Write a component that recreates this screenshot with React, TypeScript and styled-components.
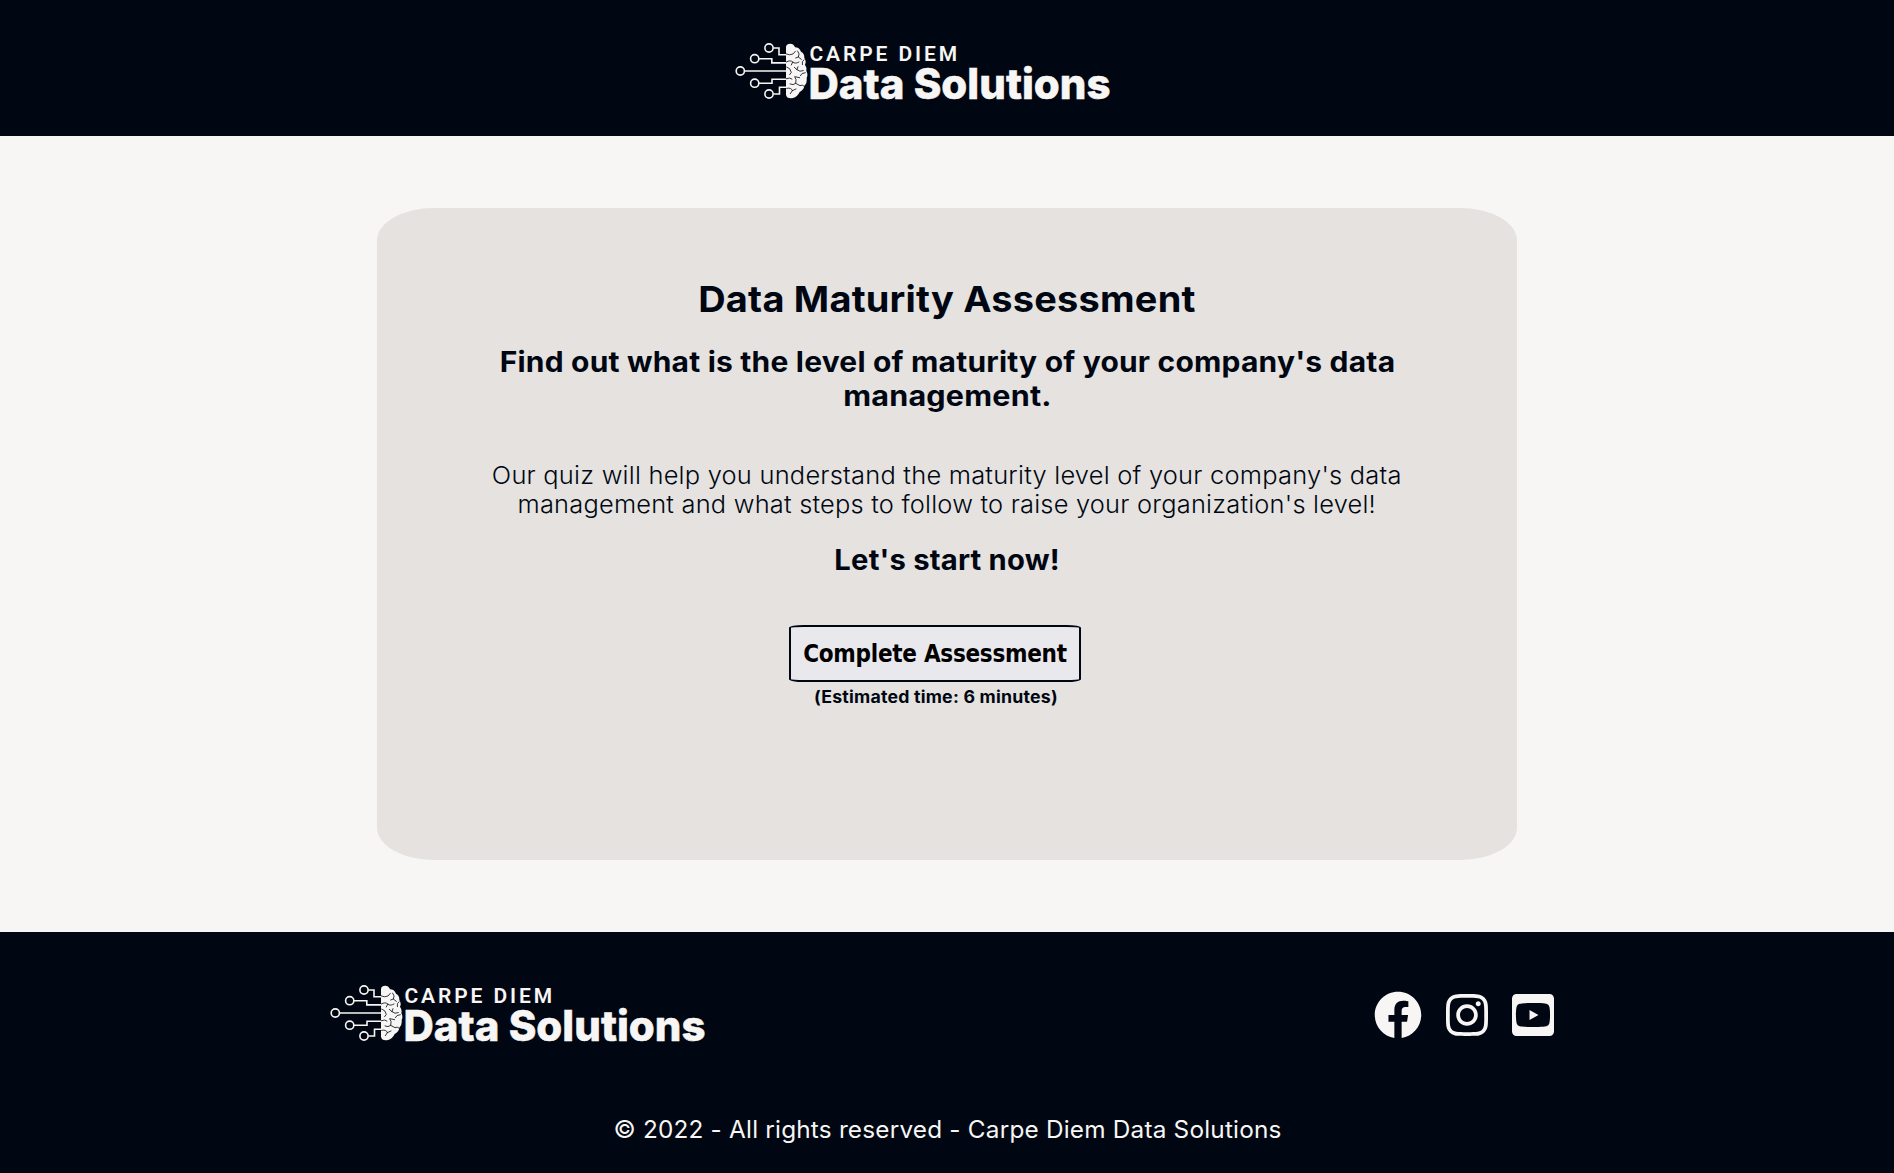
import React from "react";
import styled, { createGlobalStyle } from "styled-components";
import { FaFacebook, FaInstagram, FaYoutubeSquare } from "react-icons/fa";

const navy = "#000712";
const paper = "#f7f6f4";

const GlobalStyle = createGlobalStyle`
  *, *::before, *::after { box-sizing: border-box; }
  body {
    margin: 0;
    background: ${paper};
    color: ${navy};
    font-family: Inter, "Open Sans", sans-serif;
  }
`;

const Page = styled.div`
  display: flex;
  flex-direction: column;
  height: 1173px;
  overflow: hidden;
`;

const Header = styled.header`
  display: flex;
  justify-content: center;
  height: 136px;
  padding: 42px 48px 0 0;
  background: ${navy};
`;

const LogoSvg = styled.svg`
  display: block;
  flex: none;
  width: 376px;
  height: 60px;
  overflow: visible;
`;

const Main = styled.main`
  display: flex;
  justify-content: center;
  height: 796px;
  padding: 72px 0;
`;

const Card = styled.section`
  display: flex;
  flex-direction: column;
  align-items: center;
  width: 1140px;
  height: 652px;
  padding-top: 68px;
  border-radius: 5%;
  background: #e5e2df;
  text-align: center;
`;

const Line = styled.span<{ $stretch?: number; $spacing?: number }>`
  display: block;
  white-space: nowrap;
  letter-spacing: ${(p) => p.$spacing ?? 0.2}px;
  transform: scaleX(${(p) => p.$stretch ?? 1});
`;

const Title = styled.h1`
  margin: 0;
  font-size: 36px;
  line-height: 46px;
  font-weight: 700;
`;

const Subtitle = styled.h2<{ $top: number }>`
  margin: ${(p) => p.$top}px 0 0;
  font-size: 28px;
  line-height: 34px;
  font-weight: 700;
`;

const Intro = styled.p`
  margin: 48px 0 0;
  font-size: 24px;
  line-height: 29px;
  font-weight: 300;
`;

const Action = styled.div`
  display: flex;
  flex-direction: column;
  align-items: center;
  margin: 48px 24px 0 0;
`;

const StartButton = styled.button`
  display: flex;
  align-items: center;
  justify-content: center;
  width: 292px;
  height: 57px;
  padding: 1px 0 0;
  border: 2px solid ${navy};
  border-radius: 5%;
  background: #e9e9ed;
  color: #000;
  font: 700 24px "DejaVu Sans Condensed", "DejaVu Sans", sans-serif;
  font-stretch: condensed;
`;

const Estimate = styled.p`
  margin: 4px 0 0 2px;
  font-size: 17px;
  line-height: 22px;
  font-weight: 700;
`;

const Footer = styled.footer`
  display: flex;
  flex-direction: column;
  height: 241px;
  padding-top: 52px;
  border-bottom: 1px solid #000;
  background: ${navy};
  color: ${paper};
`;

const FooterRow = styled.div`
  display: flex;
  justify-content: space-between;
  padding: 0 340px 0 330px;
`;

const Socials = styled.nav`
  display: flex;
  align-items: center;
  gap: 24px;
  height: 62px;
`;

const SocialLink = styled.a<{ $width: number }>`
  display: flex;
  color: inherit;
  svg {
    width: ${(p) => p.$width}px;
    height: 48px;
  }
`;

const Copyright = styled.p`
  display: flex;
  justify-content: center;
  margin: 69px 0 0;
  font-size: 24px;
  line-height: 30px;
  font-weight: 400;
`;

function Logo() {
  return (
    <LogoSvg viewBox="0 0 376 60" role="img" aria-label="Carpe Diem Data Solutions">
      <g fill="none" stroke={paper} strokeWidth="1.6">
        <circle cx="34" cy="6" r="4.1" />
        <circle cx="19.7" cy="16.7" r="4.1" />
        <circle cx="5.3" cy="29" r="4.1" />
        <circle cx="19.7" cy="41.2" r="4.1" />
        <circle cx="34" cy="52" r="4.1" />
        <path d="M38.2 6H44V12.7H52M23.9 16.7H36.8V20.9H52M9.5 29H52M23.9 41.2H37V37.3H52M38.2 52H44.5V45.3H52" />
      </g>
      <g transform="translate(-5 -4) scale(.3333)">
        <path
          fill={paper}
          d="M168 28Q168 17 181 17Q192 18 195 28Q208 28 213 41Q224 46 223 60Q230 70 225 80Q232 90 229 99Q235 110 230 120Q232 136 223 143Q222 155 209 162Q202 177 189 180Q170 183 168 170Z"
        />
        <path
          fill="none"
          stroke={navy}
          strokeWidth="2.4"
          strokeLinecap="round"
          d="M169 48Q178 53 189 48L196 40M203 39Q211 48 205 57L197 60M205 57L214 64M169 72Q181 65 188 72Q195 79 207 72M188 72L184 81M222 65Q214 70 217 80M170 87Q182 90 184 103L179 110M193 88L201 95Q209 103 220 98M201 95L204 86M226 104Q214 104 211 113M169 122Q180 117 186 123M180 138Q190 143 197 136Q201 124 194 116L209 119M197 136L210 143Q217 139 222 144M170 151Q184 148 187 158L181 167M187 158L198 153"
        />
      </g>
      <text x="74.5" y="18.8" fill={paper} fontFamily="Roboto, sans-serif" fontSize="21" fontWeight="600" textLength="147.5" lengthAdjust="spacing">
        CARPE DIEM
      </text>
      <text x="73.5" y="56.8" fill={paper} stroke={paper} strokeWidth=".5" fontFamily="Inter, sans-serif" fontSize="42" fontWeight="800" textLength="302" lengthAdjust="spacingAndGlyphs">
        Data Solutions
      </text>
    </LogoSvg>
  );
}

export default function App() {
  return (
    <Page>
      <GlobalStyle />
      <Header>
        <Logo />
      </Header>
      <Main>
        <Card>
          <Title>
            <Line $stretch={1.054}>Data Maturity Assessment</Line>
          </Title>
          <Subtitle $top={23}>
            <Line $stretch={1.07}>Find out what is the level of maturity of your company's data</Line>
            <Line $stretch={1.09}>management.</Line>
          </Subtitle>
          <Intro>
            <Line $stretch={1.061}>Our quiz will help you understand the maturity level of your company's data</Line>
            <Line $stretch={1.059}>management and what steps to follow to raise your organization's level!</Line>
          </Intro>
          <Subtitle $top={24}>
            <Line $stretch={1.043}>Let's start now!</Line>
          </Subtitle>
          <Action>
            <StartButton type="button">
              <Line $spacing={-0.28}>Complete Assessment</Line>
            </StartButton>
            <Estimate>
              <Line $stretch={1.043}>(Estimated time: 6 minutes)</Line>
            </Estimate>
          </Action>
        </Card>
      </Main>
      <Footer>
        <FooterRow>
          <Logo />
          <Socials>
            <SocialLink $width={48} aria-label="Facebook"><FaFacebook /></SocialLink>
            <SocialLink $width={42} aria-label="Instagram"><FaInstagram /></SocialLink>
            <SocialLink $width={42} aria-label="YouTube"><FaYoutubeSquare /></SocialLink>
          </Socials>
        </FooterRow>
        <Copyright>
          <Line $stretch={1.014}>© 2022 - All rights reserved - Carpe Diem Data Solutions</Line>
        </Copyright>
      </Footer>
    </Page>
  );
}
